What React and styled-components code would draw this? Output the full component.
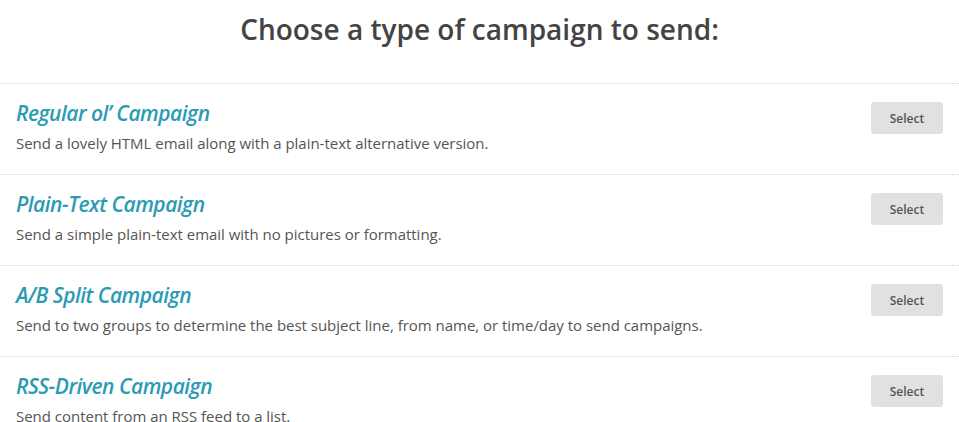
import React from "react";
import styled, { createGlobalStyle } from "styled-components";

const Global = createGlobalStyle`
  html, body { margin: 0; padding: 0; background: #fff; }
  body { font-family: "Open Sans", "Noto Sans", sans-serif; -webkit-font-smoothing: antialiased; }
`;

const Page = styled.div`
  width: 959px;
  height: 422px;
  overflow: hidden;
  background: #fff;
`;

const Heading = styled.h1`
  margin: 0;
  padding: 10px 0 0;
  height: 83px;
  box-sizing: border-box;
  text-align: center;
  font-size: 28px;
  font-weight: 600;
  color: #444;
  line-height: 38px;
`;

const List = styled.div`
  display: flex;
  flex-direction: column;
`;

const Row = styled.div`
  display: flex;
  align-items: flex-start;
  justify-content: space-between;
  border-top: 1px dotted #d4d4d4;
  padding: 15px 16px 0;
  height: 91px;
  box-sizing: border-box;
`;

const Info = styled.div`
  display: flex;
  flex-direction: column;
`;

const Title = styled.h2`
  margin: 0;
  font-size: 21px;
  font-style: italic;
  font-weight: 600;
  letter-spacing: -0.5px;
  line-height: 29px;
  color: #2b9bb4;
`;

const Desc = styled.p`
  margin: 4px 0 0;
  font-size: 15px;
  letter-spacing: -0.02px;
  line-height: 22px;
  color: #555;
`;

const Button = styled.button`
  margin-top: 3px;
  width: 72px;
  height: 32px;
  border: none;
  border-radius: 3px;
  background: #e1e1e1;
  color: #555;
  font-family: "Open Sans", sans-serif;
  font-size: 12px;
  font-weight: 600;
  cursor: pointer;
`;

const items = [
  ["Regular ol\u2019 Campaign", "Send a lovely HTML email along with a plain-text alternative version."],
  ["Plain-Text Campaign", "Send a simple plain-text email with no pictures or formatting."],
  ["A/B Split Campaign", "Send to two groups to determine the best subject line, from name, or time/day to send campaigns."],
  ["RSS-Driven Campaign", "Send content from an RSS feed to a list."],
];

export default function App() {
  return (
    <Page>
      <Global />
      <Heading>Choose a type of campaign to send:</Heading>
      <List>
        {items.map(([t, d]) => (
          <Row key={t}>
            <Info>
              <Title>{t}</Title>
              <Desc>{d}</Desc>
            </Info>
            <Button>Select</Button>
          </Row>
        ))}
      </List>
    </Page>
  );
}
